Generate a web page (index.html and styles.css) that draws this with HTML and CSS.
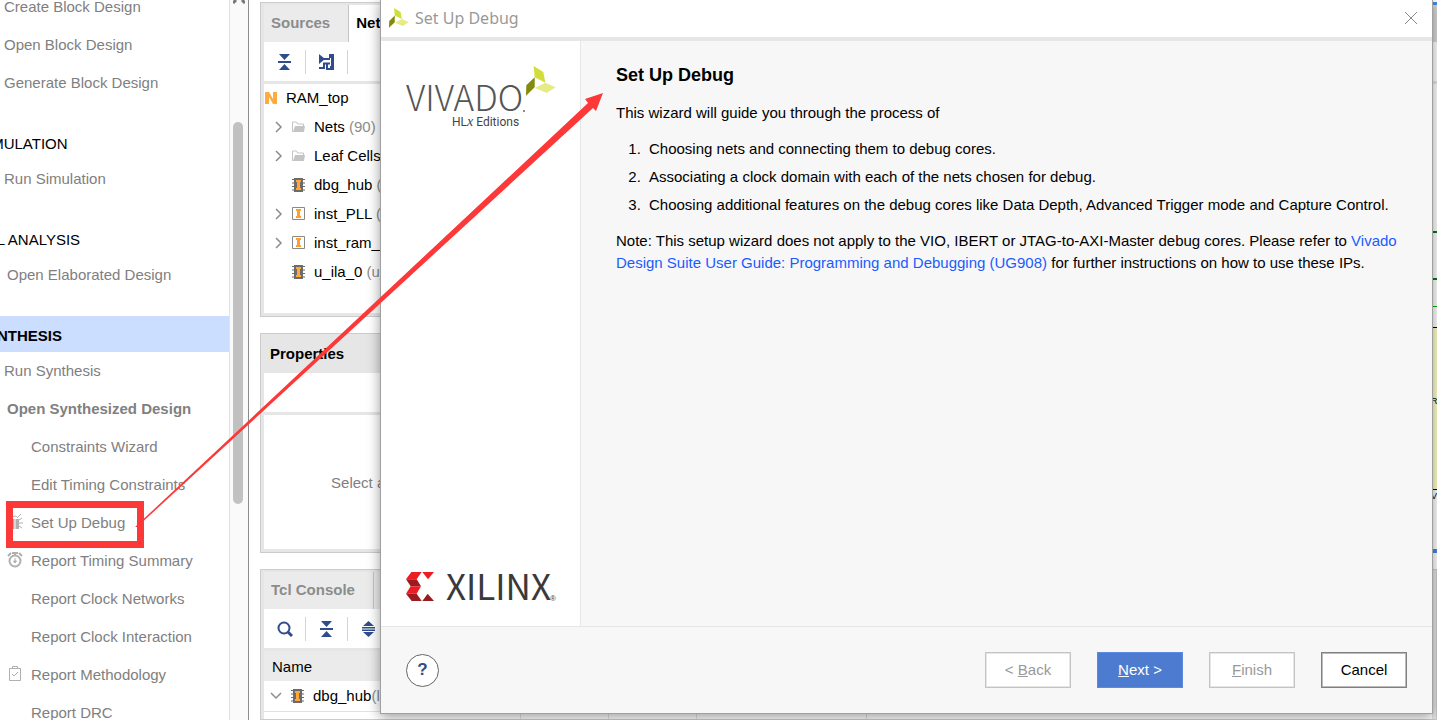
FILE: index.html
```html
<!DOCTYPE html>
<html lang="en">
<head>
  <meta charset="UTF-8" />
  <meta name="viewport" content="width=device-width, initial-scale=1.0"/>
  <title>Vivado - Set Up Debug</title>
  <link rel="stylesheet" href="styles.css">
</head>
<body>
  <!-- shared icons -->
  <svg class="defs" aria-hidden="true">
    <symbol id="i-collapse" viewBox="0 0 13 16">
      <path d="M1 0h11L6.500 6zM0 7h13v2H0zM1 16h11L6.500 10z" fill="#2f4d8c"/>
    </symbol>
    <symbol id="i-expand" viewBox="0 0 13 16">
      <path d="M1 5h11L6.500 0zM0 6h13v1.500H0zM0 8.500h13V10H0zM1 11h11L6.500 16z" fill="#2f4d8c"/>
    </symbol>
    <symbol id="i-schematic" viewBox="0 0 16 16">
      <path d="M0 0l6 5-6 5z" fill="#2f4d8c"/>
      <path d="M4 5h7M0 14h5V9.500h6M8 10v5h4" fill="none" stroke="#2f4d8c" stroke-width="2"/>
      <path d="M10 0h5v16h-4v-4h1V4h-2z" fill="#2f4d8c"/>
    </symbol>
    <symbol id="i-search" viewBox="0 0 16 16">
      <circle cx="7" cy="7" r="5.500" fill="none" stroke="#2f4d8c" stroke-width="2"/>
      <path d="M11 11l4 4" stroke="#2f4d8c" stroke-width="3"/>
    </symbol>
    <symbol id="i-right" viewBox="0 0 8 12">
      <path d="M1 1l5 5-5 5" fill="none" stroke="#8c8c8c" stroke-width="1.500"/>
    </symbol>
    <symbol id="i-down" viewBox="0 0 12 8">
      <path d="M1 1l5 5 5-5" fill="none" stroke="#8c8c8c" stroke-width="1.500"/>
    </symbol>
    <symbol id="i-folder" viewBox="0 0 13 12">
      <path d="M.5 11V1h4l1 2h6v2" fill="none" stroke="#c4c4c4"/>
      <path d="M1 11l2-6h10l-1 6z" fill="#c4c4c4"/>
    </symbol>
    <symbol id="i-core" viewBox="0 0 13 14">
      <path d="M0 1.500h13M0 5h13M0 8.500h13M0 12h13" stroke="#6b6b6b"/>
      <path d="M2 0h9v14H2z" fill="#6b6b6b"/>
      <path d="M4 2h5v2H8v6h1v2H4v-2h1V4H4z" fill="#ffa63d"/>
    </symbol>
    <symbol id="i-inst" viewBox="0 0 13 14">
      <path d="M.5 .5h12v12H.5z" fill="#fff" stroke="#8a8a8a"/>
      <path d="M4 2h5v2H8v5h1v2H4V9h1V4H4z" fill="#ff9f2e"/>
    </symbol>
    <symbol id="i-netlist" viewBox="0 0 12 12">
      <path d="M0 0h4l4 7V0h4v12H8L4 5v7H0z" fill="#ffab3d"/>
    </symbol>
    <symbol id="i-leaf" viewBox="408 48 90 90">
      <path d="M431 48l29 18 6 32-32-16z" fill="#d3dd3a"/>
      <path d="M434 82v30l-26 25 1-31z" fill="#848a0c"/>
      <path d="M435 114l31-16 31 14-27 17z" fill="#e5eb86"/>
    </symbol>
  </svg>

  <div class="app">
    <nav class="flow">
      <div class="flow-tree">
        <section class="flow-group">
          <a href="#" class="flow-item">Create Block Design</a>
          <a href="#" class="flow-item">Open Block Design</a>
          <a href="#" class="flow-item">Generate Block Design</a>
        </section>
        <section class="flow-group">
          <h2>SIMULATION</h2>
          <a href="#" class="flow-item">Run Simulation</a>
        </section>
        <section class="flow-group">
          <h2>RTL ANALYSIS</h2>
          <a href="#" class="flow-item branch">Open Elaborated Design</a>
        </section>
        <section class="flow-group">
          <h2 class="current">SYNTHESIS</h2>
          <a href="#" class="flow-item">Run Synthesis</a>
          <a href="#" class="flow-item branch open">Open Synthesized Design</a>
          <a href="#" class="flow-item sub">Constraints Wizard</a>
          <a href="#" class="flow-item sub">Edit Timing Constraints</a>
          <a href="#" class="flow-item sub">
            <svg class="flow-icon" viewBox="0 0 16 16"><path d="M4 5h8v10H4z" fill="#b0b0b0"/><path d="M8 5v10" stroke="#fff"/><path d="M5 4q3-4 6 0M12 6l3-2M12 9h4M12 12l3 2M4 6L1 4M4 9H0M4 12l-3 2M11 3l3-3M5 3L2 0" fill="none" stroke="#b0b0b0"/></svg>
            Set Up Debug
          </a>
          <a href="#" class="flow-item sub">
            <svg class="flow-icon" viewBox="0 0 16 16"><circle cx="8" cy="9" r="5.500" fill="none" stroke="#b0b0b0" stroke-width="2"/><path d="M5 1h6M8 1v3M1 4l3-3M15 4l-3-3" stroke="#b0b0b0" stroke-width="2"/><path d="M8 6v3M6.500 9h3L8 11z" fill="#b0b0b0" stroke="#b0b0b0"/></svg>
            Report Timing Summary
          </a>
          <a href="#" class="flow-item sub">Report Clock Networks</a>
          <a href="#" class="flow-item sub">Report Clock Interaction</a>
          <a href="#" class="flow-item sub">
            <svg class="flow-icon" viewBox="0 0 16 16"><path d="M2.500 2.500h11v12h-11zM5.500 2.500v-2h5v2" fill="none" stroke="#b0b0b0"/><path d="M5 8l2 2 4-4" fill="none" stroke="#b0b0b0"/></svg>
            Report Methodology
          </a>
          <a href="#" class="flow-item sub">Report DRC</a>
        </section>
      </div>
    </nav>
    <div class="scrollbar">
      <svg class="scroll-up" viewBox="0 0 12 4"><path d="M0 3L3 0M12 3L9 0" stroke="#777" stroke-width="3"/></svg>
      <div class="thumb"></div>
    </div>

    <main class="workspace">
      <section class="panel sources">
        <div class="tabs">
          <button class="tab">Sources</button>
          <button class="tab active">Netlist</button>
        </div>
        <div class="toolbar">
          <button aria-label="Collapse all"><svg width="13" height="16"><use href="#i-collapse"/></svg></button>
          <button aria-label="Schematic"><svg width="16" height="16"><use href="#i-schematic"/></svg></button>
        </div>
        <ul class="tree">
          <li class="root"><svg width="12" height="12"><use href="#i-netlist"/></svg>RAM_top</li>
          <li><svg class="arrow" width="8" height="12"><use href="#i-right"/></svg><svg width="13" height="12"><use href="#i-folder"/></svg><span>Nets <i>(90)</i></span></li>
          <li><svg class="arrow" width="8" height="12"><use href="#i-right"/></svg><svg width="13" height="12"><use href="#i-folder"/></svg><span>Leaf Cells</span></li>
          <li><span class="arrow"></span><svg width="13" height="14"><use href="#i-core"/></svg><span>dbg_hub <i>(dbg_hub)</i></span></li>
          <li><svg class="arrow" width="8" height="12"><use href="#i-right"/></svg><svg width="13" height="14"><use href="#i-inst"/></svg><span>inst_PLL <i>(PLL)</i></span></li>
          <li><svg class="arrow" width="8" height="12"><use href="#i-right"/></svg><svg width="13" height="14"><use href="#i-inst"/></svg><span>inst_ram_<i>s</i></span></li>
          <li><span class="arrow"></span><svg width="13" height="14"><use href="#i-core"/></svg><span>u_ila_0 <i>(u_ila_0)</i></span></li>
        </ul>
      </section>

      <section class="panel properties">
        <div class="tabs"><h2>Properties</h2></div>
        <div class="toolbar"></div>
        <p class="empty">Select an object to see properties</p>
      </section>

      <section class="panel schematic">
        <div class="tabs"></div>
        <div class="toolbar"></div>
        <svg class="wires" viewBox="0 0 60 465" width="60" height="465">
          <path d="M0 148h60M0 195h60" stroke="#008000" stroke-width="2"/>
          <path d="M0 222.500h60" stroke="#00b400"/>
          <path d="M0 243.500h70v162H0" fill="#ffffc8" stroke="#000"/>
          <text x="54" y="320">R</text>
          <text x="54" y="415">V</text>
        </svg>
      </section>

      <section class="panel console">
        <div class="tabs"><button class="tab">Tcl Console</button></div>
        <div class="toolbar">
          <button aria-label="Search"><svg width="16" height="16"><use href="#i-search"/></svg></button>
          <button aria-label="Collapse all"><svg width="13" height="16"><use href="#i-collapse"/></svg></button>
          <button aria-label="Expand all"><svg width="13" height="16"><use href="#i-expand"/></svg></button>
        </div>
        <table>
          <thead>
            <tr><th class="col-name">Name</th><th class="col-cell"></th><th class="col-cell"></th><th class="col-clock"></th><th></th></tr>
          </thead>
          <tbody>
            <tr><td><div class="cell"><svg width="12" height="8"><use href="#i-down"/></svg><svg width="13" height="14"><use href="#i-core"/></svg><span>dbg_hub<i>(labtools)</i></span></div></td><td></td><td></td><td></td><td></td></tr>
            <tr><td></td><td></td><td></td><td></td><td></td></tr>
          </tbody>
        </table>
      </section>
    </main>
  </div>

  <div class="dialog" role="dialog" aria-labelledby="dialog-title">
    <header class="titlebar">
      <svg width="20" height="20"><use href="#i-leaf"/></svg>
      <span id="dialog-title">Set Up Debug</span>
      <button class="close" aria-label="Close"><svg width="14" height="14" viewBox="0 0 14 14"><path d="M1 1l12 12M13 1L1 13" stroke="#888"/></svg></button>
    </header>
    <div class="dialog-body">
      <aside class="brand">
        <svg class="vivado" viewBox="0 0 150 62" width="150" height="62">
          <text class="vivado-name" x="0" y="45">VIVADO</text>
          <circle cx="118" cy="45" r="1" fill="#666"/>
          <text class="vivado-edition" x="46" y="60">HL<tspan class="x">x</tspan> Editions</text>
          <use href="#i-leaf" x="120" y="0" width="30" height="30"/>
        </svg>
        <svg class="xilinx" viewBox="0 0 152 32" width="152" height="32">
          <svg x="0" y="2" width="28" height="29" viewBox="48 66 84 87">
            <path d="M64 66h31L80 88H48z" fill="#ed1c24"/>
            <path d="M48 88h32l13 21H62z" fill="#9a1b20"/>
            <path d="M62 109h31l-13 22H48z" fill="#ed1c24"/>
            <path d="M48 131h32l15 22H65z" fill="#9a1b20"/>
            <path d="M97 66h35l-18 22z" fill="#ed1c24"/>
            <path d="M97 153h35l-19-22z" fill="#9a1b20"/>
          </svg>
          <text class="xilinx-name" x="40" y="30">XILINX</text>
          <text class="xilinx-reg" x="144" y="31">®</text>
        </svg>
      </aside>
      <div class="content">
        <h1>Set Up Debug</h1>
        <p>This wizard will guide you through the process of</p>
        <ol>
          <li>Choosing nets and connecting them to debug cores.</li>
          <li>Associating a clock domain with each of the nets chosen for debug.</li>
          <li>Choosing additional features on the debug cores like Data Depth, Advanced Trigger mode and Capture Control.</li>
        </ol>
        <p>Note: This setup wizard does not apply to the VIO, IBERT or JTAG-to-AXI-Master debug cores. Please refer to <a href="#">Vivado Design Suite User Guide: Programming and Debugging (UG908)</a> for further instructions on how to use these IPs.</p>
      </div>
    </div>
    <footer>
      <button class="help" aria-label="Help">?</button>
      <button class="btn" disabled><span>&lt; <u>B</u>ack</span></button>
      <button class="btn primary"><span><u>N</u>ext &gt;</span></button>
      <button class="btn" disabled><span><u>F</u>inish</span></button>
      <button class="btn cancel">Cancel</button>
    </footer>
  </div>

  <!-- red marker: box round the menu entry and arrow to the wizard -->
  <svg class="marker" width="620" height="560" viewBox="0 0 620 560" aria-hidden="true">
    <rect x="9.500" y="504.500" width="131" height="40" fill="none" stroke="#fd3838" stroke-width="7"/>
    <path d="M135 527L588 103L585 99L603 93L596 111L593 108L137 527z" fill="#fd3838"/>
  </svg>
</body>
</html>
```

FILE: styles.css
```css
* {
  box-sizing: border-box;
}

body {
  margin: 0;
  height: 100vh;
  overflow: hidden;
  position: relative;
  font-family: "Liberation Sans", Arial, sans-serif;
  font-size: 15px;
  color: #000;
  background: #fff;
}

h1, h2, p, ul, ol {
  margin: 0;
  padding: 0;
}

button {
  font: inherit;
  border: none;
  background: none;
  padding: 0;
}

i {
  font-style: normal;
  color: #8c8c8c;
}

.defs {
  display: none;
}

.app {
  display: flex;
  height: 100%;
}

/* flow navigator, scrolled a little to the right */
.flow {
  flex: 0 0 229px;
  overflow: hidden;
}

.flow-tree {
  margin: -12px 0 0 -27px;
}

.flow-group {
  margin-bottom: 22px;
}

.flow-group h2 {
  height: 36px;
  padding-left: 4px;
  line-height: 40px;
  font-size: 15px;
  font-weight: normal;
}

.flow-group h2.current {
  background: #ccdeff;
  font-weight: bold;
}

.flow-item {
  display: flex;
  align-items: center;
  height: 38px;
  padding: 0 0 2px 31px;
  color: #808080;
  text-decoration: none;
  white-space: nowrap;
}

.flow-item.branch {
  padding-left: 34px;
}

.flow-item.open {
  font-weight: bold;
}

.flow-item.sub {
  padding-left: 58px;
}

.flow-icon {
  width: 16px;
  height: 16px;
  margin-left: -24px;
  margin-right: 8px;
}

.scrollbar {
  flex: 0 0 19px;
  border-left: 1px solid #e2e2e2;
  border-right: 1px solid #8c8c8c;
  background: #fafafa;
  padding: 0 3px;
}

.scroll-up {
  display: block;
  width: 12px;
  height: 4px;
}

.thumb {
  width: 10px;
  height: 53vh;
  margin-top: 118px;
  border-radius: 5px;
  background: #c1c1c1;
}

/* docked panels */
.workspace {
  flex: 1;
  min-width: 0;
  display: grid;
  grid-template-columns: 5fr 11fr;
  grid-template-rows: 315px 220px 1fr;
  gap: 16px 12px;
  padding: 2px 0 0 12px;
}

.panel {
  border: 1px solid #ccc;
  background: #e6e6e6;
  padding: 2px 3px 3px;
  min-width: 0;
  min-height: 0;
  overflow: hidden;
  display: flex;
  flex-direction: column;
}

.schematic {
  grid-column: 2;
  grid-row: 1 / 3;
  border: none;
  border-top: 3px solid #4a86e8;
  border-bottom: 4px solid #4a86e8;
  padding: 0;
}

.console {
  grid-column: 1 / 3;
}

.sources, .properties, .console {
  margin-left: -1px;
}

.tabs {
  flex: 0 0 37px;
  display: flex;
  align-items: center;
  background: #ebebeb;
}

.schematic .tabs {
  background: #d8d8d8;
}

.properties .tabs {
  background: #e6e6e6;
}

.tabs h2 {
  font-size: 15px;
  padding: 0 0 2px 6px;
}

.tab {
  height: 100%;
  padding: 0 18px 2px 7px;
  font-weight: bold;
  color: #8c8c8c;
  border-right: 1px solid #c4c4c4;
}

.tab.active {
  background: #fff;
  color: #000;
}

.toolbar {
  flex: 0 0 42px;
  display: flex;
  align-items: center;
  background: #fff;
  border-bottom: 3px solid #e6e6e6;
}

.toolbar button {
  width: 42px;
  height: 24px;
  display: flex;
  align-items: center;
  justify-content: center;
  border-right: 1px solid #d4d4d4;
}

.tree {
  flex: 1;
  background: #fff;
  list-style: none;
}

.tree li {
  display: flex;
  align-items: center;
  gap: 9px;
  height: 29px;
  padding: 0 0 2px 11px;
  white-space: nowrap;
}

.tree .root {
  padding-left: 1px;
}

.tree .arrow {
  flex: 0 0 8px;
}

.empty {
  flex: 1;
  display: flex;
  align-items: center;
  justify-content: center;
  background: #fff;
  color: #808080;
}

.wires {
  align-self: flex-end;
  font-size: 9px;
  background: #fff;
}

table {
  width: 100%;
  table-layout: fixed;
  border-collapse: collapse;
  background: #fff;
}

th {
  height: 30px;
  padding: 0 0 0 8px;
  background: #ebebeb;
  font-weight: normal;
  text-align: left;
}

td {
  height: 30px;
  padding: 0;
  border-bottom: 1px solid #e2e2e2;
  border-right: 1px solid #e2e2e2;
}

.col-name {
  width: 256px;
}

.col-cell {
  width: 88px;
}

.col-clock {
  width: 170px;
}

.cell {
  display: flex;
  align-items: center;
  padding-left: 6px;
  gap: 9px;
}

/* wizard window */
.dialog {
  position: absolute;
  top: -1px;
  right: 4px;
  bottom: 6px;
  left: 380px;
  display: flex;
  flex-direction: column;
  border: 1px solid #a0a0a0;
  background: #f7f7f7;
  box-shadow: 0 3px 12px rgba(0, 0, 0, 0.4);
}

.titlebar {
  display: flex;
  align-items: center;
  height: 41px;
  padding: 0 14px 2px 8px;
  background: #fff;
  border-bottom: 4px solid #e6e6e6;
  font-family: "Noto Sans", sans-serif;
  font-size: 16px;
  color: #999;
  gap: 6px;
}

.close {
  display: flex;
  margin-left: auto;
}

.dialog-body {
  flex: 1;
  display: flex;
}

.brand {
  flex: 0 0 200px;
  display: flex;
  flex-direction: column;
  justify-content: space-between;
  padding: 25px 0 24px 25px;
  background: #fff;
  border-right: 1px solid #e6e6e6;
}

.vivado-name {
  font-family: "Noto Sans CJK SC", sans-serif;
  font-size: 35px;
  font-weight: 300;
  fill: #555;
}

.vivado-edition {
  font-family: Roboto, sans-serif;
  font-size: 12px;
  fill: #444;
}

.vivado-edition .x {
  font-family: "Liberation Serif", serif;
  font-size: 14px;
  font-style: italic;
}

.xilinx-name {
  font-family: "Noto Sans CJK SC", sans-serif;
  font-size: 35px;
  fill: #3a3a3a;
}

.xilinx-reg {
  font-size: 8px;
  fill: #3a3a3a;
}

.content {
  flex: 1;
  padding: 22px 35px;
  line-height: 22px;
}

.content h1 {
  font-size: 18px;
  line-height: 24px;
  margin-bottom: 15px;
}

.content ol {
  margin: 11px 0;
  padding-left: 29px;
  line-height: 28px;
}

.content li {
  padding-left: 4px;
}

.content a {
  color: #1a5cff;
  text-decoration: none;
}

footer {
  flex: 0 0 87px;
  display: flex;
  align-items: center;
  gap: 26px;
  padding: 0 25px;
  border-top: 1px solid #e6e6e6;
}

.help {
  width: 33px;
  height: 33px;
  margin-right: auto;
  border: 1px solid #666;
  border-radius: 50%;
  background: #fff;
  color: #2f4d8c;
  font-size: 17px;
  font-weight: bold;
}

.btn {
  width: 86px;
  height: 36px;
  padding-bottom: 2px;
  border: 1px solid #c4c4c4;
  box-shadow: inset 0 0 0 1px #e6e6e6;
  background: #fff;
  color: #999;
}

.btn.primary {
  border-color: #5c8ae0;
  box-shadow: none;
  background: #4d7bcf;
  color: #fff;
}

.btn.cancel {
  border-color: #808080;
  box-shadow: inset 0 0 0 1px #bbb;
  color: #000;
}

.marker {
  position: absolute;
  top: 0;
  left: 0;
  pointer-events: none;
}
```
